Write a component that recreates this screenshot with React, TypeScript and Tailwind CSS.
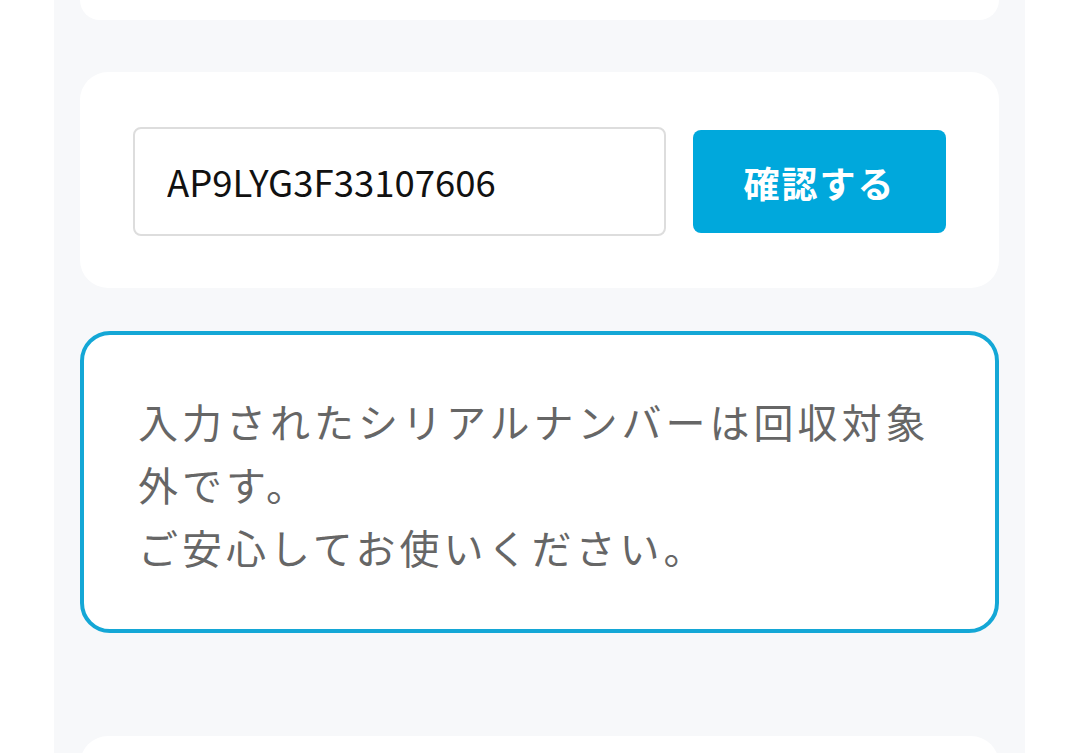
const font = { fontFamily: '"Noto Sans CJK JP", "Noto Sans", sans-serif' };

const SerialForm = () => {
  return (
    <div className="mx-[26px] mt-[52px] flex shrink-0 items-center gap-[27px] rounded-[28px] bg-white px-[53px] pt-[55px] pb-[52px]">
      <input
        className="h-[109px] w-[533px] rounded-[8px] border-2 border-[#dddddd] bg-white px-[32px] text-[36.5px] text-[#111111] outline-none"
        defaultValue="AP9LYG3F33107606"
        style={font}
      />
      <button className="flex h-[103px] flex-1 items-center justify-center rounded-[8px] bg-[#00a8dc] text-[36px] font-bold tracking-[2px] text-white">
        確認する
      </button>
    </div>
  );
};

const ResultMessage = () => {
  return (
    <div className="mx-[26px] mt-[43px] shrink-0 rounded-[30px] border-4 border-[#14a7d6] bg-white px-[54px] pt-[55px] pb-[50px]">
      <p className="text-[40px] leading-[63px] tracking-[4px] text-[#666666]">
        入力されたシリアルナンバーは回収対象外です。
        <br />
        ご安心してお使いください。
      </p>
    </div>
  );
};

const App = () => {
  return (
    <div className="flex h-[753px] w-full justify-center overflow-hidden bg-white" style={font}>
      <div className="ml-[54px] mr-[55px] flex w-[971px] flex-col bg-[#f7f8fa]">
        <div className="mx-[26px] h-[20px] shrink-0 rounded-b-[28px] bg-white" />
        <SerialForm />
        <ResultMessage />
        <div className="mx-[26px] mt-[103px] h-[60px] shrink-0 rounded-t-[28px] bg-white" />
      </div>
    </div>
  );
};

export default App;
